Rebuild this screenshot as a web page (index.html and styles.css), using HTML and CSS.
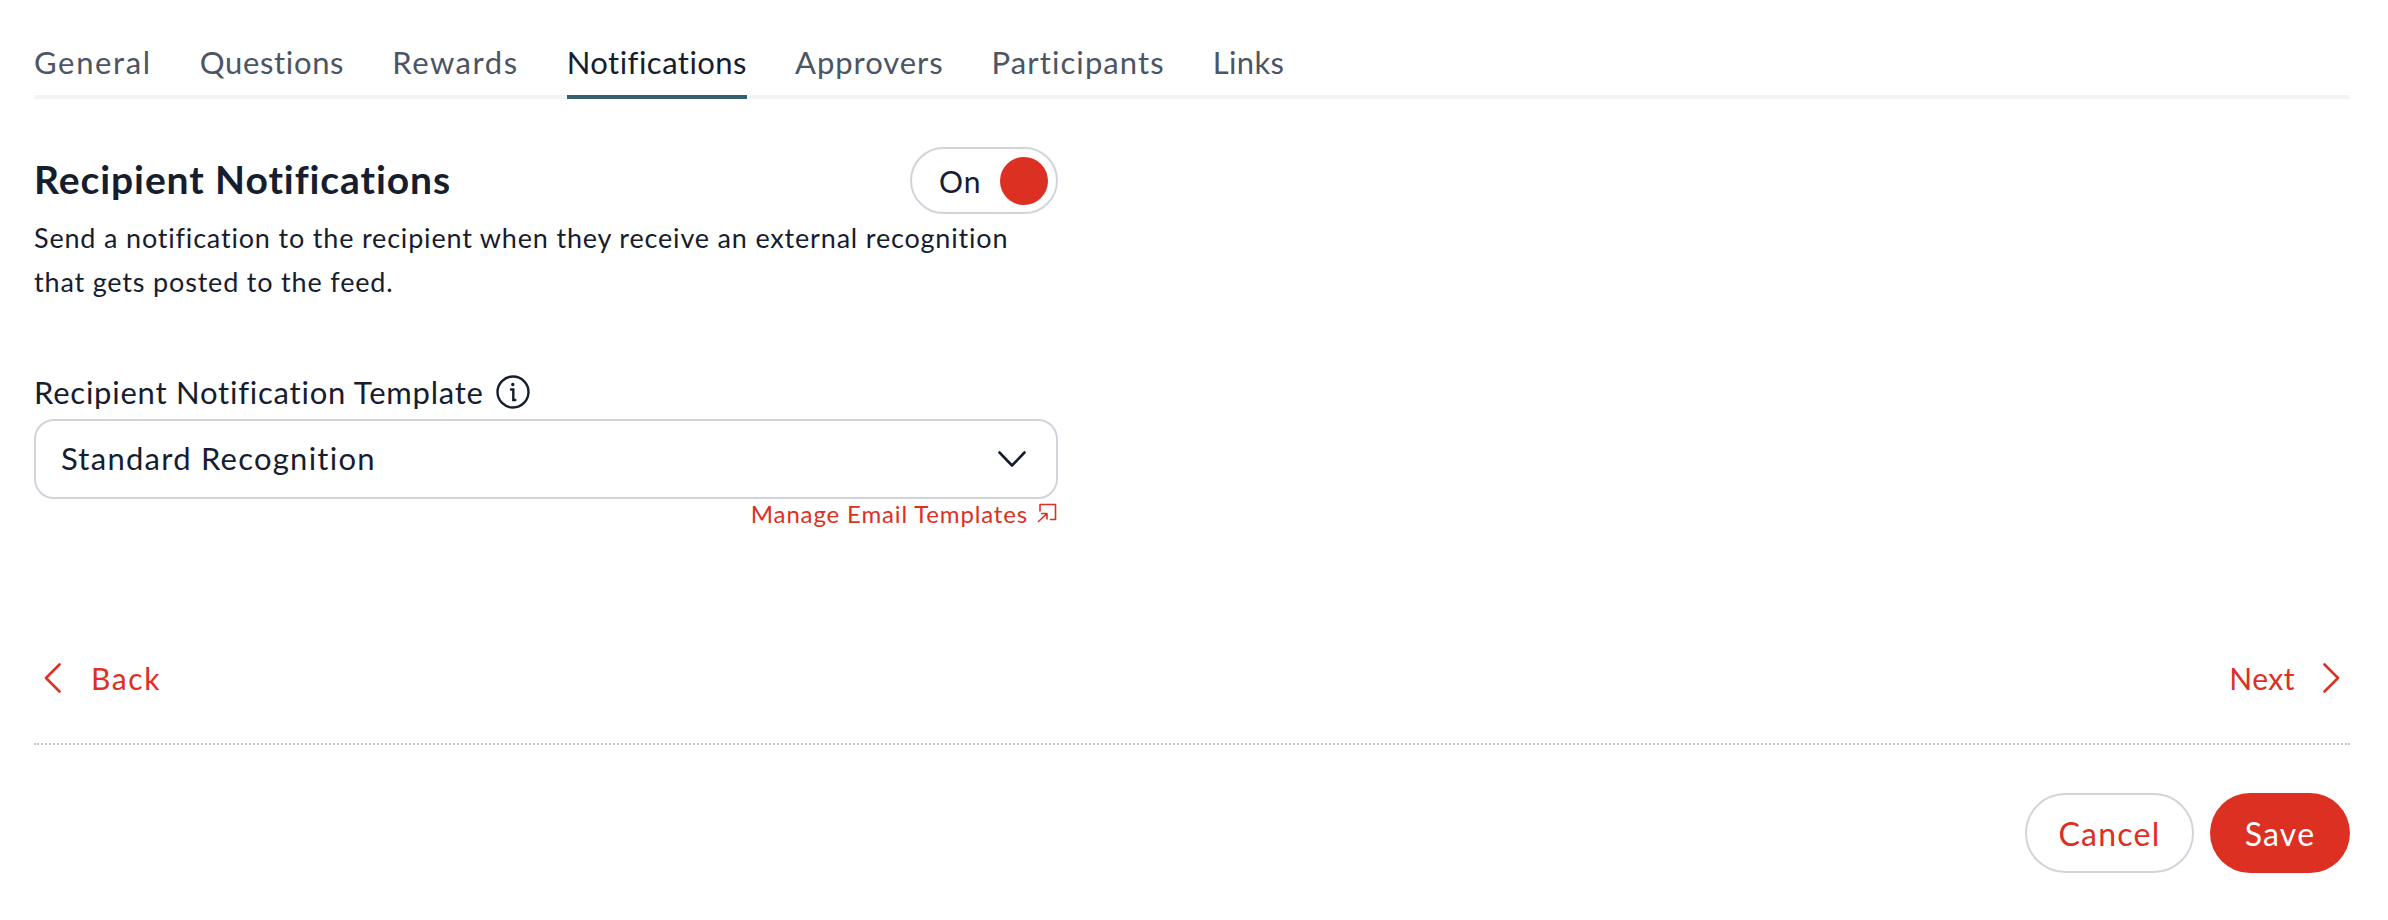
FILE: index.html
```html
<!DOCTYPE html>
<html lang="en">
<head>
  <meta charset="UTF-8">
  <title>Recipient Notifications</title>
  <link rel="stylesheet" href="styles.css">
</head>
<body>
<div class="page">
  <nav class="tabs">
    <a class="tab">General</a>
    <a class="tab">Questions</a>
    <a class="tab">Rewards</a>
    <a class="tab active">Notifications</a>
    <a class="tab">Approvers</a>
    <a class="tab">Participants</a>
    <a class="tab">Links</a>
  </nav>

  <section class="panel">
    <div class="panel-head">
      <h2>Recipient Notifications</h2>
      <div class="toggle"><span>On</span><i class="knob"></i></div>
    </div>
    <p class="desc">Send a notification to the recipient when they receive an external recognition that gets posted to the feed.</p>

    <div class="field-label">
      <span>Recipient Notification Template</span>
      <svg width="34" height="34" viewBox="0 0 34 34" fill="none" stroke="#161d2e" stroke-width="2.4" stroke-linecap="round">
        <circle cx="17" cy="17" r="15.500"/>
        <path d="M15 14.500h2.300v10.500h2"/>
        <circle cx="16.800" cy="9.500" r="1" fill="#161d2e" stroke-width="1.400"/>
      </svg>
    </div>
    <div class="select">
      <span class="select-value">Standard Recognition</span>
      <svg width="28" height="16" viewBox="0 0 28 16" fill="none" stroke="#161d2e" stroke-width="2.6" stroke-linecap="round" stroke-linejoin="round">
        <path d="M1.5 1.5L14 14.5L26.5 1.5"/>
      </svg>
    </div>
    <a class="manage">
      <span>Manage Email Templates</span>
      <svg width="20" height="20" viewBox="0 0 20 20" fill="none" stroke="#dc3023" stroke-width="1.6" stroke-linecap="round" stroke-linejoin="round">
        <path d="M3 8V1.500h15.500v15h-5M1.500 18.500l8-7.500M4.500 10.500h5.500v5.500"/>
      </svg>
    </a>
  </section>

  <div class="steps">
    <a class="step step-back">
      <svg width="18" height="30" viewBox="0 0 18 30" fill="none" stroke="#dc3023" stroke-width="2.6" stroke-linecap="round" stroke-linejoin="round"><path d="M15.500 1.500L2 15L15.500 28.500"/></svg>
      <span>Back</span>
    </a>
    <a class="step step-next">
      <span>Next</span>
      <svg width="18" height="30" viewBox="0 0 18 30" fill="none" stroke="#dc3023" stroke-width="2.6" stroke-linecap="round" stroke-linejoin="round"><path d="M2.500 1.500L16 15L2.500 28.500"/></svg>
    </a>
  </div>

  <div class="actions">
    <button class="btn btn-outline">Cancel</button>
    <button class="btn btn-primary">Save</button>
  </div>
</div>
</body>
</html>
```
FILE: styles.css
```css
body { margin: 0; background: #fff; color: #161d2e; font-family: Lato, "Open Sans", sans-serif; }
.page { padding: 33px 38px 0 34px; }

.tabs { display: flex; gap: 48px; border-bottom: 4px solid #f3f4f6; height: 62px; }
.tab { height: 62px; font-size: 31px; line-height: 59px; color: #4b5563; letter-spacing: 0.65px; }
.tab:nth-child(1) { letter-spacing: 1.65px; }
.tab:nth-child(3) { letter-spacing: 1.55px; }
.tab:nth-child(4) { letter-spacing: 0.47px; }
.tab:nth-child(5) { letter-spacing: 0.95px; }
.tab:nth-child(6) { letter-spacing: 1.1px; }
.tab:nth-child(7) { letter-spacing: 0.35px; }
.tab.active { color: #161d2e; border-bottom: 4px solid #32606f; }

.panel { width: 1024px; padding-top: 48px; }
.panel-head { display: flex; justify-content: space-between; align-items: center; height: 67px; }
h2 { margin: 0 0 3px; font-size: 39px; font-weight: 700; letter-spacing: 0.92px; }
.toggle { display: flex; align-items: center; box-sizing: border-box; width: 148px; height: 67px; border: 2px solid #d1d5db; border-radius: 34px; padding: 0 8px 0 27px; justify-content: space-between; font-size: 30px; letter-spacing: 1px; }
.knob { width: 48px; height: 48px; border-radius: 50%; background: #dc3023; }
.desc { margin: 2px 0 0; font-size: 27px; line-height: 44px; letter-spacing: 0.82px; }

.field-label { display: flex; align-items: center; gap: 12px; margin-top: 67px; height: 42px; font-size: 31px; letter-spacing: 0.77px; }
.select { display: flex; justify-content: space-between; align-items: center; box-sizing: border-box; height: 80px; margin-top: 6px; padding: 0 30px 0 25px; border: 2px solid #d1d5db; border-radius: 20px; font-size: 31px; letter-spacing: 1.25px; }
.select-value { margin-bottom: 2px; }
.manage { display: flex; justify-content: flex-end; align-items: center; gap: 9px; padding-right: 1px; height: 28px; color: #dc3023; font-size: 24px; letter-spacing: 0.85px; }

.steps { display: flex; justify-content: space-between; align-items: center; margin-top: 131px; padding: 0 10px; height: 40px; }
.step { display: flex; align-items: center; color: #dc3023; font-size: 30px; }
.step-back { gap: 29px; letter-spacing: 1.6px; }
.step-next { gap: 27px; letter-spacing: 0.5px; }

.actions { display: flex; justify-content: flex-end; gap: 16px; margin-top: 45px; padding-top: 48px; border-top: 2px dotted #c4c4c4; }
.btn { height: 80px; border-radius: 40px; font-family: inherit; font-size: 32px; letter-spacing: 1.25px; }
.btn-outline { width: 169px; background: #fff; border: 2px solid #d1d5db; color: #dc3023; }
.btn-primary { width: 140px; background: #dc3023; border: none; color: #fff; }
```
